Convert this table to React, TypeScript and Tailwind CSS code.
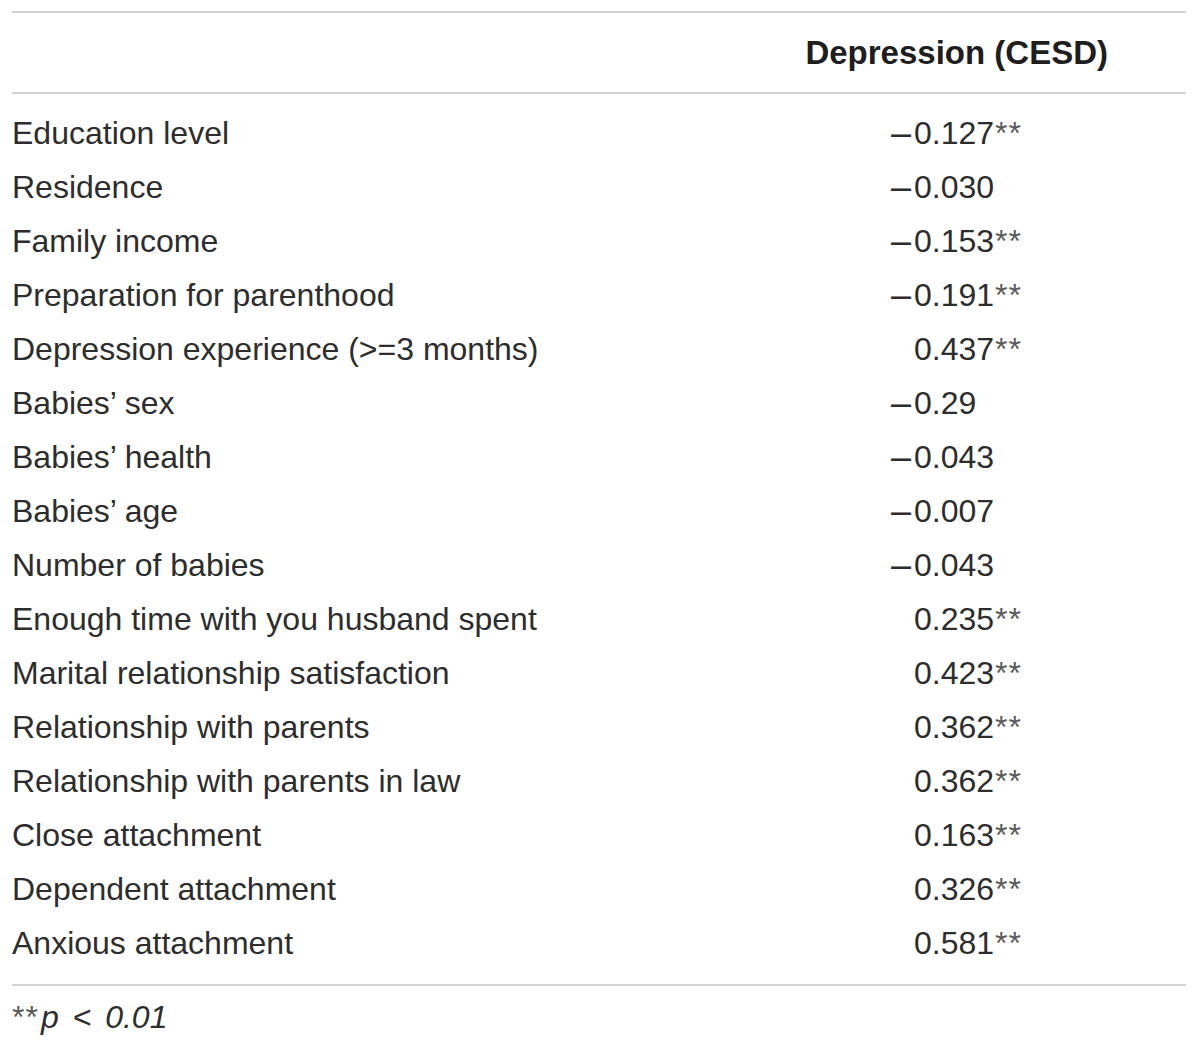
const rows: { label: string; value: string; sig?: boolean }[] = [
  { label: 'Education level', value: '–0.127', sig: true },
  { label: 'Residence', value: '–0.030' },
  { label: 'Family income', value: '–0.153', sig: true },
  { label: 'Preparation for parenthood', value: '–0.191', sig: true },
  { label: 'Depression experience (>=3 months)', value: '0.437', sig: true },
  { label: 'Babies’ sex', value: '–0.29' },
  { label: 'Babies’ health', value: '–0.043' },
  { label: 'Babies’ age', value: '–0.007' },
  { label: 'Number of babies', value: '–0.043' },
  { label: 'Enough time with you husband spent', value: '0.235', sig: true },
  { label: 'Marital relationship satisfaction', value: '0.423', sig: true },
  { label: 'Relationship with parents', value: '0.362', sig: true },
  { label: 'Relationship with parents in law', value: '0.362', sig: true },
  { label: 'Close attachment', value: '0.163', sig: true },
  { label: 'Dependent attachment', value: '0.326', sig: true },
  { label: 'Anxious attachment', value: '0.581', sig: true },
]

function Value({ value, sig }: { value: string; sig?: boolean }) {
  const negative = value.startsWith('–')
  const digits = negative ? value.slice(1) : value
  return (
    <div className="flex items-start">
      <span className="inline-block w-[24px] pl-[1px] text-[36px]">{negative ? '–' : ''}</span>
      <span>{digits}</span>
      {sig && <span className="pl-[1px] tracking-[1px] text-[#5a5a5a]">**</span>}
    </div>
  )
}

export default function App() {
  return (
    <div className="min-h-[1047px] bg-white pt-[11px] text-[#2d2d2d] [font-family:'Liberation_Sans',Arial,sans-serif]">
      <div className="mx-[12px] w-[1174px]">
        <div className="flex h-[83px] items-center justify-end border-y-2 border-[#d2d2d2] pr-[78px]">
          <span className="text-[33px] font-bold leading-none text-[#1e1e1e]">Depression (CESD)</span>
        </div>
        <div className="pt-[12px] pb-[14px]">
          {rows.map((r) => (
            <div key={r.label} className="grid h-[54px] grid-cols-[878px_1fr] items-center text-[32px] leading-[54px]">
              <span>{r.label}</span>
              <Value value={r.value} sig={r.sig} />
            </div>
          ))}
        </div>
        <div className="border-t-2 border-[#d2d2d2] pt-[9px] text-[32px] leading-[44px]">
          <span className="pr-[2px] tracking-[1px] text-[#5a5a5a]">**</span>
          <span className="italic [word-spacing:5px]">p &lt; 0.01</span>
        </div>
      </div>
    </div>
  )
}
